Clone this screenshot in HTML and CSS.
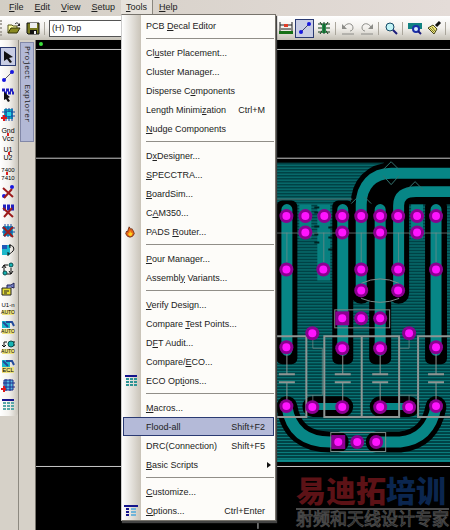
FILE: index.html
```html
<!DOCTYPE html>
<html lang="en">
<head>
    <meta charset="UTF-8">
    <meta name="viewport" content="width=device-width, initial-scale=1.0">
    <title>PCB Layout</title>
    <link rel="stylesheet" href="styles.css">
</head>
<body>
    <div class="app">
        <nav class="menubar">
            <button class="menubar-item"><u>F</u>ile</button>
            <button class="menubar-item"><u>E</u>dit</button>
            <button class="menubar-item"><u>V</u>iew</button>
            <button class="menubar-item"><u>S</u>etup</button>
            <div class="menubar-drop">
                <button class="menubar-item open"><u>T</u>ools</button>
                <div class="menu">
                    <button class="menu-item"><span>PCB <u>D</u>ecal Editor</span></button>
                    <hr>
                    <button class="menu-item"><span>Cl<u>u</u>ster Placement...</span></button>
                    <button class="menu-item"><span>Cluster Mana<u>g</u>er...</span></button>
                    <button class="menu-item"><span>Disperse C<u>o</u>mponents</span></button>
                    <button class="menu-item"><span>Length Minimi<u>z</u>ation</span><kbd>Ctrl+M</kbd></button>
                    <button class="menu-item"><span><u>N</u>udge Components</span></button>
                    <hr>
                    <button class="menu-item"><span>D<u>x</u>Designer...</span></button>
                    <button class="menu-item"><span><u>S</u>PECCTRA...</span></button>
                    <button class="menu-item"><span><u>B</u>oardSim...</span></button>
                    <button class="menu-item"><span>C<u>A</u>M350...</span></button>
                    <button class="menu-item">
                        <svg class="menu-icon flame" viewBox="0 0 14 14"><path d="M6 1l2 3 1-1 2 3 1 3-2 3-3 1-3-1-2-3 1-3 1 1z" fill="#e8641a" stroke="#6b2a10"/><path d="M7 5l1 3h2l-1 3-2 1-2-2V8l1 1z" fill="#ffd21e"/></svg>
                        <span>PADS <u>R</u>outer...</span>
                    </button>
                    <hr>
                    <button class="menu-item"><span><u>P</u>our Manager...</span></button>
                    <button class="menu-item"><span>Assembl<u>y</u> Variants...</span></button>
                    <hr>
                    <button class="menu-item"><span><u>V</u>erify Design...</span></button>
                    <button class="menu-item"><span>Compare <u>T</u>est Points...</span></button>
                    <button class="menu-item"><span>D<u>F</u>T Audit...</span></button>
                    <button class="menu-item"><span>Compare/<u>E</u>CO...</span></button>
                    <button class="menu-item">
                        <svg class="menu-icon" viewBox="0 0 14 14"><path d="M1 1h12v2H1z" fill="#14148c"/><path d="M2 5h3M6 5h3M10 5h3M2 8h3M6 8h3M10 8h3M2 11h3M6 11h3M10 11h3" stroke="#2d9494" stroke-width="2"/></svg>
                        <span>ECO Opt<u>i</u>ons...</span>
                    </button>
                    <hr>
                    <button class="menu-item"><span><u>M</u>acros...</span></button>
                    <button class="menu-item selected"><span>Flood-all</span><kbd>Shift+F2</kbd></button>
                    <button class="menu-item"><span>DRC(Connection)</span><kbd>Shift+F5</kbd></button>
                    <button class="menu-item submenu"><span><u>B</u>asic Scripts</span></button>
                    <hr>
                    <button class="menu-item"><span><u>C</u>ustomize...</span></button>
                    <button class="menu-item">
                        <svg class="menu-icon" viewBox="0 0 14 14"><path d="M0 1h14v2H0z" fill="#14148c"/><path d="M2 5h3M2 8h3M2 11h3" stroke="#14148c" stroke-width="2"/><path d="M7 5h5M7 8h5M7 11h5" stroke="#6fb4d8" stroke-width="2"/></svg>
                        <span><u>O</u>ptions...</span><kbd>Ctrl+Enter</kbd>
                    </button>
                </div>
            </div>
            <button class="menubar-item"><u>H</u>elp</button>
        </nav>

        <div class="toolbar">
            <span class="grip"></span>
            <button class="tool" aria-label="Open"><svg viewBox="0 0 14 14"><path d="M1 12V4h4l1 1h4v2" fill="#ffffa0" stroke="#55551a"/><path d="M1 12l3-5h9l-3 5z" fill="#8a8a20" stroke="#33330a"/><path d="M8 3c2-2 3-1 4 1" fill="none" stroke="#222"/><path d="M13 2v3h-3z" fill="#222"/></svg></button>
            <button class="tool" aria-label="Save"><svg viewBox="0 0 14 14"><path d="M1 2h12v11H2l-1-1z" fill="#77781c" stroke="#111"/><path d="M4 2h7v5H4z" fill="#eee"/><path d="M4 9h7v4H4z" fill="#111"/><path d="M8 10h2v3H8z" fill="#eee"/></svg></button>
            <span class="sep"></span>
            <select class="layer" aria-label="Layer"><option>(H) Top</option></select>
            <button class="tool" aria-label="Board"><svg viewBox="0 0 14 14"><path d="M1 1v9M13 1v9M1 4h4M9 4h4M2 8h10" stroke="#222" fill="none"/><path d="M5 3h4v3H5z" fill="#e03c28"/><path d="M0 10h14v3H0z" fill="#167016"/></svg></button>
            <button class="tool active" aria-label="Route"><svg viewBox="0 0 14 14"><path d="M3 11l8-8" stroke="#446"/><circle cx="3" cy="11" r="2" fill="#1717e0"/><circle cx="11" cy="3" r="2" fill="#1717e0"/></svg></button>
            <button class="tool" aria-label="Component"><svg viewBox="0 0 14 14"><path d="M1 3h12M1 7h12M1 11h12M3 1l8 12M11 1L3 13" stroke="#143c1c"/><path d="M5 3h4v9H5z" fill="#26914a"/><path d="M7 1v12" stroke="#0a4020"/></svg></button>
            <span class="sep"></span>
            <button class="tool" aria-label="Undo"><svg viewBox="0 0 14 14"><path d="M3 6c3-5 9-4 9 1 0 2-2 3-3 3" fill="none" stroke="#8c8c88"/><path d="M1 3v5h5z" fill="#8c8c88"/><path d="M1 13h12" stroke="#8c8c88"/></svg></button>
            <button class="tool" aria-label="Redo"><svg viewBox="0 0 14 14"><path d="M11 6c-3-5-9-4-9 1 0 2 2 3 3 3" fill="none" stroke="#8c8c88"/><path d="M13 3v5H8z" fill="#8c8c88"/><path d="M1 13h12" stroke="#8c8c88"/></svg></button>
            <span class="sep"></span>
            <button class="tool" aria-label="Zoom"><svg viewBox="0 0 14 14"><circle cx="6" cy="6" r="4" fill="#c2f4f7" stroke="#154a66"/><path d="M9 9l4 4" stroke="#1c1c7a" stroke-width="2"/></svg></button>
            <span class="sep"></span>
            <button class="tool" aria-label="View board"><svg viewBox="0 0 14 14"><path d="M0 2h14v6H0z" fill="#128282"/><circle cx="8" cy="8" r="3" fill="#d8eeff" stroke="#1a2fa8" stroke-width="2"/><path d="M10 10l3 3" stroke="#1a1a7a" stroke-width="2"/></svg></button>
            <button class="tool" aria-label="Redraw"><svg viewBox="0 0 14 14"><path d="M13 1L9 5" stroke="#111" stroke-width="3"/><path d="M6 4l4 4-3 5-6-6z" fill="#f0e678" stroke="#44441a"/><path d="M3 7l4 4M5 6l3 4" stroke="#777730"/></svg></button>
            <span class="sep"></span>
        </div>

        <div class="workspace">
            <aside class="palette">
                <button class="tool active" aria-label="Select"><svg viewBox="0 0 14 14"><path d="M3 1l9 6-4 1 3 4-2 1-3-4-3 2z" fill="#111"/></svg></button>
                <button class="tool" aria-label="Add route"><svg viewBox="0 0 14 14"><path d="M3 11l8-8" stroke="#556"/><circle cx="3" cy="11" r="2" fill="#1717e0"/><circle cx="11" cy="3" r="2" fill="#1717e0"/></svg></button>
                <button class="tool" aria-label="Select pins"><svg viewBox="0 0 14 14"><path d="M1 2h12M3 5h10" stroke="#2020c0" stroke-width="3" stroke-dasharray="3 1"/><path d="M3 4l6 5-2 1 2 3-2 1-2-3-2 1z" fill="#111"/></svg></button>
                <button class="tool" aria-label="Add component"><svg viewBox="0 0 14 14"><path d="M3 1h9v10H3z" fill="#16a7bf"/><path d="M5 0v13M8 0v13M11 0v13M1 4h13M1 8h13" stroke="#1647a0"/><path d="M6 4h4v4H6z" fill="#25d5e4"/><path d="M0 10h6M3 7v6" stroke="#e01818" stroke-width="2"/></svg></button>
                <button class="tool" aria-label="Gnd to Vcc"><svg viewBox="0 0 14 14"><path class="swap" d="M7 6v3"/><text x="7" y="6">Gnd</text><text x="7" y="14">Vcc</text></svg></button>
                <button class="tool" aria-label="U1 to U2"><svg viewBox="0 0 14 14"><path class="swap" d="M8 6v3"/><text x="7" y="6">U1</text><text x="7" y="14">U2</text></svg></button>
                <button class="tool" aria-label="7400 to 7410"><svg viewBox="0 0 14 14"><path class="swap" d="M6 6v3"/><text class="small" x="7" y="6">7400</text><text class="small" x="7" y="14">7410</text></svg></button>
                <button class="tool" aria-label="Delete route"><svg viewBox="0 0 14 14"><circle cx="3" cy="11" r="2" fill="#1717e0"/><circle cx="11" cy="2" r="2" fill="#1717e0"/><path class="cross" d="M2 3l10 9M11 4l-8 9"/></svg></button>
                <button class="tool" aria-label="Delete pins"><svg viewBox="0 0 14 14"><path d="M2 2h11M2 5h11" stroke="#2020c0" stroke-width="3" stroke-dasharray="3 1"/><path class="cross" d="M2 4l10 9M11 4l-8 9"/></svg></button>
                <button class="tool" aria-label="Delete component"><svg viewBox="0 0 14 14"><path d="M2 2h10v10H2z" fill="#18a9c8"/><path d="M4 0v13M7 0v13M10 0v13M1 4h13M1 8h13" stroke="#1647a0"/><path class="cross" d="M2 3l10 10M12 3L3 12"/></svg></button>
                <button class="tool" aria-label="Rotate"><svg viewBox="0 0 14 14"><path d="M1 2h8v10H1z" fill="#1cb8cb"/><path d="M1 2h5v4H1z" fill="#2059b8"/><path d="M8 3c4-2 6 3 4 5s-3 3-5 3M9 1v4M7 9v4" fill="none" stroke="#111"/></svg></button>
                <button class="tool" aria-label="Swap gate"><svg viewBox="0 0 14 14"><path d="M3 12V3h4M1 6l2-3 2 3M10 6v6H6M12 9l-2 3-2-3" fill="none" stroke="#111"/><circle cx="10" cy="3" r="2" fill="#16b3b3" stroke="#0c4a4a"/><circle cx="4" cy="11" r="2" fill="#16b3b3" stroke="#0c4a4a"/></svg></button>
                <button class="tool" aria-label="Edit gate"><svg viewBox="0 0 14 14"><path d="M1 6h9v7H1z" fill="#e5dc36" stroke="#222"/><path d="M6 6V3h4l3-2v5l-3-1" fill="#7784c8" stroke="#225"/><path d="M3 9h5M3 11h3" stroke="#222"/></svg></button>
                <button class="tool" aria-label="Auto rename"><svg viewBox="0 0 14 14"><text class="small" x="7" y="6">U1-n</text><path class="auto" d="M1 9h12v5H1z"/><text class="tiny" x="7" y="13">AUTO</text></svg></button>
                <button class="tool" aria-label="Auto rotate"><svg viewBox="0 0 14 14"><path d="M1 1h8v7H1z" fill="#1cb8cb"/><path d="M5 2h6l2 4M2 2l5 5" fill="none" stroke="#234a9a" stroke-width="2"/><path class="auto" d="M1 9h12v5H1z"/><text class="tiny" x="7" y="13">AUTO</text></svg></button>
                <button class="tool" aria-label="Auto swap"><svg viewBox="0 0 14 14"><path d="M3 7V2h3M1 5l2 2 2-2" fill="none" stroke="#111"/><path d="M7 4h2M12 2h2M12 5h2" stroke="#111"/><circle cx="10" cy="4" r="3" fill="#16b3b3" stroke="#0c4a4a"/><path class="auto" d="M1 9h12v5H1z"/><text class="tiny" x="7" y="13">AUTO</text></svg></button>
                <button class="tool" aria-label="Auto ECL"><svg viewBox="0 0 14 14"><path d="M1 1h8v7H1z" fill="#1cb8cb"/><path d="M5 2h6l2 4M2 2l5 5" fill="none" stroke="#234a9a" stroke-width="2"/><path class="auto" d="M1 8h12v6H1z"/><text class="small" x="7" y="13">ECL</text></svg></button>
                <button class="tool" aria-label="Reuse"><svg viewBox="0 0 14 14"><path d="M3 2h9v10H3z" fill="#58b8e0" stroke="#1c2f8c"/><path d="M5 1v12M9 1v12M2 5h12M2 9h12" stroke="#1c2f8c"/><path d="M0 11h5M3 8v6" stroke="#e01818" stroke-width="2"/></svg></button>
                <button class="tool" aria-label="ECO options"><svg viewBox="0 0 14 14"><path d="M1 1h12v2H1z" fill="#14148c"/><path d="M2 5h3M6 5h3M10 5h3M2 8h3M6 8h3M10 8h3M2 11h3M6 11h3M10 11h3" stroke="#58a8a8" stroke-width="2"/></svg></button>
            </aside>
            <div class="dock"><button class="dock-tab">Project Explorer</button></div>

            <main class="canvas">
                <svg class="board" viewBox="35 40 415 490" preserveAspectRatio="xMinYMin slice">
                    <defs>
                        <pattern id="hatch" width="4" height="3" patternUnits="userSpaceOnUse">
                            <rect width="4" height="3" fill="#004245"/>
                            <rect width="4" height="1" fill="#0a7c7c"/>
                        </pattern>
                        <g id="pad"><circle r="7" fill="#8b0090"/><circle r="4" fill="#ff14ff"/></g>
                        <g id="pad-sq"><path d="M-7-7H7V7H-7z" fill="#8b0090"/><circle r="4" fill="#ff14ff"/></g>
                        <g id="cap"><path d="M0-27V-4M0 4V26" stroke-width="1"/><path d="M-8-4H8M-8 4H8" stroke-width="2"/></g>
                    </defs>
                    <circle cx="40" cy="44" r="2" fill="#3be03b"/>
                    <path d="M35 49.5H450M35 158.5H450M35 467.5H450M257.5 467V530" stroke="#c8c8c8"/>

                    <!-- copper pour -->
                    <path d="M270 163H384L366 180 352 200H450V463H270z" fill="url(#hatch)"/>
                    <path d="M270 461.5H450" stroke="#0d8b8b" stroke-width="2"/>
                    <path d="M352 205V199Q357 168 391 163H450V205z" fill="#000"/>
                    <g fill="#078080">
                        <path d="M299 205h12v34h-12zM317 205h13v76h-13zM411 205h12v34h-12z"/>
                    </g>
                    <path d="M314 208h5M314 213h4M314 227h5M314 235h4M314 243h5M328 228h5M328 238h4M328 250h5" stroke="#022" stroke-width="2"/>

                    <!-- clearance around the traces -->
                    <g fill="#000">
                        <rect x="276" y="201" width="21" height="164" rx="6"/>
                        <rect x="332" y="201" width="21" height="164" rx="6"/>
                        <rect x="369" y="201" width="22" height="164" rx="6"/>
                        <rect x="425" y="201" width="22" height="164" rx="6"/>
                    </g>
                    <g class="trace clearance">
                        <path d="M361 294V205C361 186 373 173.500 391 173.500H460M398.500 294V206Q398.500 192 416 192H460"/>
                        <path d="M312.500 407.500H342.500M380 407.500H409M286.500 407.500Q292 443 330 443H338M376 443H400Q430 440 436 407.500M376 443H377"/>
                    </g>
                    <g class="trace copper">
                        <path d="M286.500 210V351M342.500 210V351M380 210V351M436 210V351M361 292V205C361 186 373 173.500 391 173.500H460M398.500 292V206Q398.500 192 416 192H460"/>
                        <path d="M286.500 407.500Q292 443 330 443H338M376 443H400Q430 440 436 407.500"/>
                        <path d="M312.500 407.500H342.500M380 407.500H409" stroke-width="7"/>
                    </g>

                    <!-- silkscreen -->
                    <g fill="none" stroke="#7b8c8a">
                        <path d="M270 199.500H352M270 233.500H450M286.500 233V263M323.500 233V263M361 233V263M398.500 233V263M436 233V263" stroke-opacity=".7"/>
                        <path d="M383 170l8-8 8 8M383 176l8 9 8-9M407 190l8-8 8 8M351 204l7-7M371 204l-7-7" stroke="#34736f"/>
                        <path d="M361 284Q380 275 399 284M361 299Q380 307 399 299"/>
                        <rect x="334.500" y="310.500" width="55" height="18"/>
                        <rect x="330.500" y="433.500" width="55" height="19"/>
                        <path d="M312.500 334V349H322V396H306M312.500 396V408M409 334V349H399M409 396V408M399 396H418" stroke-opacity=".7"/>
                    </g>
                    <g fill="none" stroke="#8e9694" stroke-width="2">
                        <path d="M270 337H306V418H270M324 337H399V418H324zM361.500 337V418M450 337H418V418H450"/>
                        <use href="#cap" x="286.500" y="379"/><use href="#cap" x="342.500" y="379"/>
                        <use href="#cap" x="380" y="379"/><use href="#cap" x="436" y="379"/>
                    </g>

                    <!-- pads -->
                    <use href="#pad" x="286" y="216.500"/><use href="#pad" x="305" y="216.500"/><use href="#pad" x="324" y="216.500"/>
                    <use href="#pad" x="342" y="216.500"/><use href="#pad" x="361" y="216.500"/><use href="#pad" x="380" y="216.500"/>
                    <use href="#pad" x="398" y="216.500"/><use href="#pad" x="417" y="216.500"/><use href="#pad" x="436" y="216.500"/>
                    <use href="#pad" x="305" y="233"/><use href="#pad" x="342" y="233"/><use href="#pad" x="380" y="233"/><use href="#pad" x="417" y="233"/>
                    <use href="#pad" x="286" y="270"/><use href="#pad" x="323" y="270"/><use href="#pad" x="361" y="270"/><use href="#pad" x="398" y="270"/><use href="#pad" x="436" y="270"/>
                    <use href="#pad" x="361" y="291"/><use href="#pad" x="398" y="291"/>
                    <use href="#pad-sq" x="342" y="319"/><use href="#pad" x="361" y="319"/><use href="#pad" x="380" y="319"/>
                    <use href="#pad" x="312" y="334"/><use href="#pad" x="409" y="334"/>
                    <use href="#pad" x="286" y="348"/><use href="#pad" x="342" y="349"/><use href="#pad" x="380" y="349"/><use href="#pad" x="436" y="348"/>
                    <use href="#pad" x="286" y="407"/><use href="#pad" x="312" y="408"/><use href="#pad" x="342" y="408"/>
                    <use href="#pad" x="380" y="408"/><use href="#pad" x="409" y="408"/><use href="#pad" x="436" y="407"/>
                    <use href="#pad-sq" x="338" y="443"/><use href="#pad" x="357" y="443"/><use href="#pad" x="376" y="443"/>
                </svg>
                <div class="watermark">
                    <p class="brand">易迪拓<span>培训</span></p>
                    <p class="slogan">射频和天线设计专家</p>
                </div>
            </main>
        </div>
    </div>
</body>
</html>
```
FILE: styles.css
```css
:root {
    --face: #d6d1c8;
    --ink: #222;
    --select: #b4bad8;
    --select-border: #2a3a72;
}

* {
    margin: 0;
    padding: 0;
    box-sizing: border-box;
}

body {
    font-family: "Liberation Sans", Arial, sans-serif;
    font-size: 9px;
    line-height: 12px;
    color: var(--ink);
    background: var(--face);
}

button,
select {
    font: inherit;
    color: inherit;
    background: none;
    border: 0;
}

u {
    text-underline-offset: 1px;
}

.app {
    display: flex;
    flex-direction: column;
    min-height: 100vh;
}

/* menu bar */
.menubar {
    display: flex;
    gap: 1px;
    height: 16px;
    padding-left: 4px;
    background: linear-gradient(90deg, #d3cec5, #e4dcd8);
}

.menubar-item {
    height: 14px;
    padding: 0 5px;
    line-height: 12px;
}

.menubar-item.open {
    width: 32px;
    background: #e6e2dc;
    border-right: 1px solid #8a867e;
}

.menubar-drop {
    position: relative;
}

.menu {
    position: absolute;
    top: 14px;
    left: 0;
    z-index: 2;
    display: flex;
    flex-direction: column;
    width: 155px;
    padding: 1px 1px 0 0;
    background: linear-gradient(90deg, #fff, #c9c3b8 19px, #fdfcf9 19px);
    border: 1px solid #77736c;
    border-left-color: #ccc;
    box-shadow: 1px 2px 1px #444;
}

.menu hr {
    height: 1px;
    margin: 3px 0 4px 24px;
    background: #918e88;
    border: 0;
}

.menu-item {
    position: relative;
    display: flex;
    justify-content: space-between;
    align-items: center;
    height: 19px;
    margin-left: 1px;
    padding: 0 9px 0 23px;
    text-align: left;
    white-space: nowrap;
}

.menu-item kbd {
    font: inherit;
}

.menu-item.selected {
    background: var(--select);
    box-shadow: inset 0 0 0 1px var(--select-border);
}

.menu-icon {
    position: absolute;
    left: 1px;
    width: 14px;
    height: 14px;
}

.menu-icon.flame {
    width: 12px;
    height: 12px;
}

.submenu::after {
    content: "";
    border: 3px solid transparent;
    border-left: 4px solid #111;
    border-right: 0;
    margin-right: -6px;
}

/* toolbar */
.toolbar {
    display: flex;
    align-items: center;
    height: 24px;
    background: linear-gradient(#fff, #f2f0ec 50%, #c4c0b6);
}

.grip {
    width: 4px;
    height: 16px;
    border-left: 2px dotted #aaa69e;
}

.tool {
    display: flex;
    flex: none;
    justify-content: center;
    align-items: center;
    width: 19px;
    height: 19px;
}

.tool.active {
    background: #c8cde4;
    border: 1px solid var(--select-border);
}

.tool svg {
    flex: none;
    width: 14px;
    height: 14px;
    overflow: visible;
}

.sep {
    flex: none;
    width: 1px;
    height: 13px;
    margin: 0 2px;
    background: #aaa69c;
}

.layer {
    flex: none;
    width: 226px;
    height: 17px;
    margin: 0 1px 0 2px;
    padding-left: 2px;
    appearance: none;
    background: #fff;
    border: 1px solid #555;
}

/* left side */
.workspace {
    display: flex;
    flex: 1;
}

.palette {
    display: flex;
    flex-direction: column;
    align-self: flex-start;
    align-items: center;
    width: 18px;
    padding: 7px 2px 2px 0;
    background: linear-gradient(90deg, #fff, #f3f1ed 50%, #cac5bb);
    border-radius: 0 0 4px 0;
}

.palette .tool {
    width: 16px;
}

.palette .tool:nth-child(3n) {
    margin-bottom: 1px;
}

.palette text {
    font-size: 7px;
    text-anchor: middle;
}

.palette .small {
    font-size: 6px;
}

.palette .tiny {
    font-size: 5px;
}

.palette .swap {
    stroke: #e02020;
    stroke-width: 2;
}

.palette .cross {
    fill: none;
    stroke: #9c1c1c;
    stroke-width: 2;
}

.palette .auto {
    fill: #ede17c;
}

.dock {
    width: 18px;
    padding: 2px 2px 0 1px;
    border-left: 1px solid #8d8980;
    border-right: 1px solid #77736b;
}

.dock-tab {
    width: 14px;
    height: 100px;
    padding-top: 3px;
    font: 8px/12px "Liberation Mono", monospace;
    text-align: left;
    writing-mode: vertical-rl;
    background: #b3b9d6;
    border: 1px solid #8288a8;
}

/* drawing area */
.canvas {
    position: relative;
    flex: 1;
    min-width: 0;
    background: #000;
    overflow: hidden;
}

.board {
    display: block;
    width: 100%;
}

.trace {
    fill: none;
    stroke-linecap: round;
}

.clearance {
    stroke: #000;
    stroke-width: 21px;
}

.copper {
    stroke: #078686;
    stroke-width: 11;
}

.watermark {
    position: absolute;
    right: 1px;
    bottom: 0;
    font-family: "Liberation Sans", "Noto Sans CJK SC", sans-serif;
    white-space: nowrap;
}

.brand {
    font-size: 30px;
    font-weight: 900;
    line-height: 32px;
    color: #5c1216;
    border-bottom: 2px solid #4a4a4a;
}

.brand span {
    color: #0b264f;
}

.slogan {
    font-size: 17px;
    line-height: 20px;
    color: #000;
    -webkit-text-stroke: 1px #484848;
}
```
